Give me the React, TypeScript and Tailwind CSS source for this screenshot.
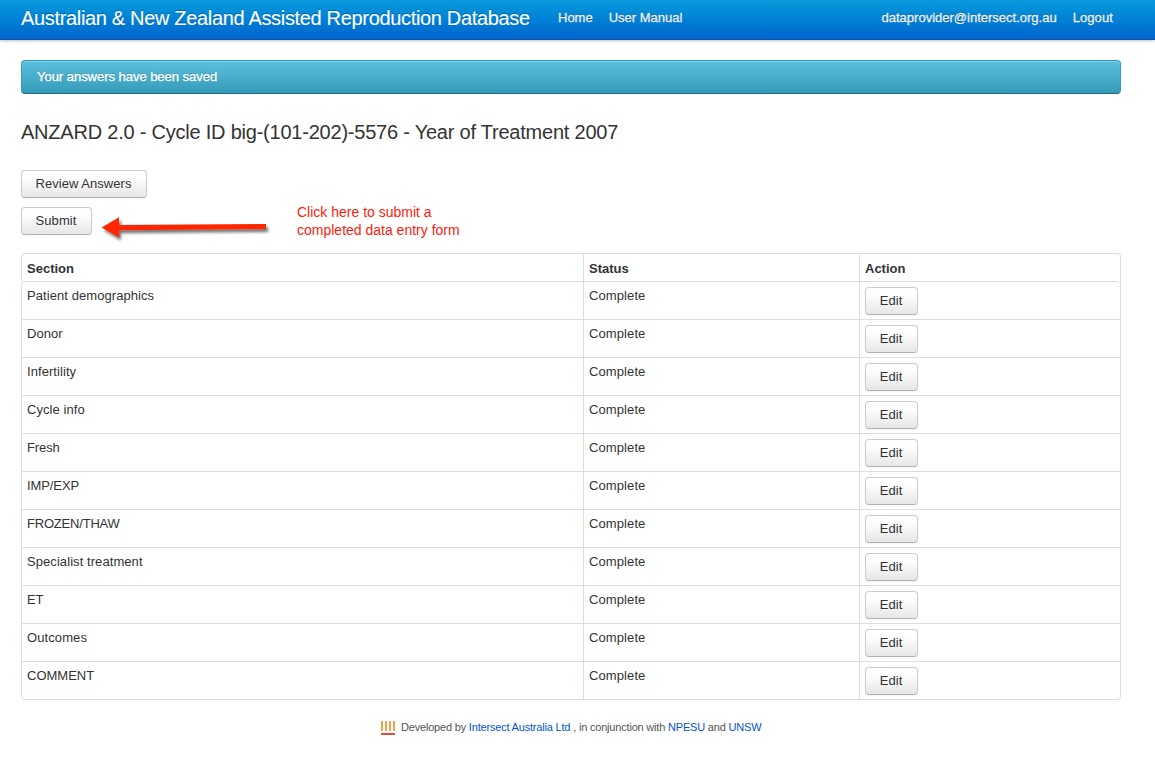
import React from "react";

const sections = [
  { name: "Patient demographics", tracking: "tracking-[0.07px]" },
  { name: "Donor", tracking: "tracking-[0.05px]" },
  { name: "Infertility", tracking: "tracking-[0.07px]" },
  { name: "Cycle info", tracking: "tracking-[0.07px]" },
  { name: "Fresh", tracking: "tracking-[-0.1px]" },
  { name: "IMP/EXP", tracking: "tracking-[-0.1px]" },
  { name: "FROZEN/THAW", tracking: "tracking-[-0.2px]" },
  { name: "Specialist treatment", tracking: "tracking-[0.07px]" },
  { name: "ET", tracking: "tracking-[-0.2px]" },
  { name: "Outcomes", tracking: "tracking-[0.1px]" },
  { name: "COMMENT", tracking: "tracking-normal" },
];

function Button({ children, className = "" }: { children: React.ReactNode; className?: string }) {
  return (
    <button
      type="button"
      className={`block h-7 shrink-0 rounded-[4px] border border-[#cccccc] border-b-[#b3b3b3] bg-linear-to-b from-white from-25% to-[#e6e6e6] pr-[1px] pb-px text-center text-[13px] leading-[18px] tracking-[0.05px] whitespace-nowrap text-[#333] shadow-[inset_0_1px_0_rgba(255,255,255,0.2),0_1px_2px_rgba(0,0,0,0.05)] ${className}`}
    >
      {children}
    </button>
  );
}

function Arrow() {
  return (
    <svg width="180" height="30" viewBox="0 0 180 30" className="block overflow-visible">
      <defs>
        <filter id="arrow-shadow" x="-10%" y="-50%" width="120%" height="220%">
          <feDropShadow dx="2" dy="3" stdDeviation="1.8" floodColor="#000" floodOpacity="0.55" />
        </filter>
      </defs>
      <path d="M0.7 15.6 18 5.3V13L165 11.9V17L18 18.3V25.6Z" fill="#ff2600" filter="url(#arrow-shadow)" />
    </svg>
  );
}

function IntersectLogo() {
  return (
    <svg width="14" height="14" viewBox="0 0 14 14" className="block shrink-0">
      <path d="M0 0h2v10H0zM4 0h2v10H4zM8 0h2v10H8zM12 0h2v10h-2z" fill="#f2a24a" />
      <path d="M0 12h14v2H0z" fill="#e8483c" />
    </svg>
  );
}

export default function App() {
  return (
    <div className="h-[761px] overflow-hidden bg-white font-['Liberation_Sans',Arial,sans-serif] text-[13px] leading-[18px] text-[#333]">
      <header className="flex h-10 items-center bg-linear-to-b from-[#0a9bdc] to-[#0563cd] pr-[42px] pb-[5px] pl-[21px] text-[#eeeeee] shadow-[0_1px_3px_rgba(0,0,0,0.25),inset_0_-1px_0_rgba(0,0,0,0.1)] [text-shadow:0_-1px_0_rgba(0,0,0,0.25)]">
        <a className="w-[537px] text-[20px] leading-5 tracking-[-0.33px] whitespace-nowrap text-white [-webkit-text-stroke:0.1px]">
          Australian &amp; New Zealand Assisted Reproduction Database
        </a>
        <nav className="flex flex-1 gap-4 [-webkit-text-stroke:0.3px]">
          <a>Home</a>
          <a>User Manual</a>
        </nav>
        <nav className="flex gap-4 [-webkit-text-stroke:0.3px]">
          <a>dataprovider@intersect.org.au</a>
          <a className="tracking-[0.1px]">Logout</a>
        </nav>
      </header>

      <main className="mr-[34px] ml-[21px] pt-5">
        <div className="flex h-[34px] items-center rounded-[4px] border border-[#339bb9] border-b-[#22697d] bg-linear-to-b from-[#5bc0de] to-[#339bb9] pl-[15px] tracking-[-0.03px] text-white shadow-[inset_0_1px_0_rgba(255,255,255,0.25)] [text-shadow:0_-1px_0_rgba(0,0,0,0.25)] [-webkit-text-stroke:0.3px]">
          Your answers have been saved
        </div>

        <h1 className="mt-6 h-[52px] text-[20px] leading-7 tracking-[-0.22px] whitespace-nowrap">
          ANZARD 2.0 - Cycle ID big-(101-202)-5576 - Year of Treatment 2007
        </h1>

        <div className="flex h-[83px]">
          <div className="flex w-[80px] flex-col gap-[9px]">
            <Button className="w-[126px]">Review Answers</Button>
            <Button className="w-[71px]">Submit</Button>
          </div>
          <div className="w-[196px] pt-[42px]">
            <Arrow />
          </div>
          <p className="pt-[33px] text-[14px] text-[#ff1a0d]">
            Click here to submit a<br />
            completed data entry form
          </p>
        </div>

        <table className="w-full table-fixed border-separate border-spacing-0 rounded-[4px] border border-l-0 border-[#dddddd]">
          <colgroup>
            <col className="w-[562px]" />
            <col className="w-[276px]" />
            <col />
          </colgroup>
          <thead>
            <tr className="h-[27px] text-left">
              <th className="rounded-tl-[4px] border-l border-[#dddddd] pt-[2px] pr-0 pb-0 pl-[5px] font-bold">Section</th>
              <th className="border-l border-[#dddddd] pt-[2px] pr-0 pb-0 pl-[5px] font-bold">Status</th>
              <th className="border-l border-[#dddddd] pt-[2px] pr-0 pb-0 pl-[5px] font-bold">Action</th>
            </tr>
          </thead>
          <tbody>
            {sections.map(({ name, tracking }) => (
              <tr key={name} className="group h-[38px] align-top">
                <td className={`border-t border-l border-[#dddddd] pt-[5px] pl-[5px] group-first:rounded-tl-[4px] group-last:rounded-bl-[4px] ${tracking}`}>{name}</td>
                <td className="border-t border-l border-[#dddddd] pt-[5px] pl-[5px] tracking-[0.1px]">Complete</td>
                <td className="border-t border-l border-[#dddddd] pt-[5px] pl-[5px] group-first:rounded-tr-[4px]">
                  <Button className="w-[53px]">Edit</Button>
                </td>
              </tr>
            ))}
          </tbody>
        </table>

        <footer className="mt-[19px] flex h-[18px] items-center pl-[360px] text-[11px] tracking-[-0.19px] whitespace-nowrap text-[#555]">
          <IntersectLogo />
          <span className="mb-[2px] ml-[6px]">
            Developed by <a className="text-[#0055cc]">Intersect Australia Ltd</a> , in conjunction with{" "}
            <a className="text-[#0055cc]">NPESU</a> and <a className="text-[#0055cc]">UNSW</a>
          </span>
        </footer>
      </main>
    </div>
  );
}
